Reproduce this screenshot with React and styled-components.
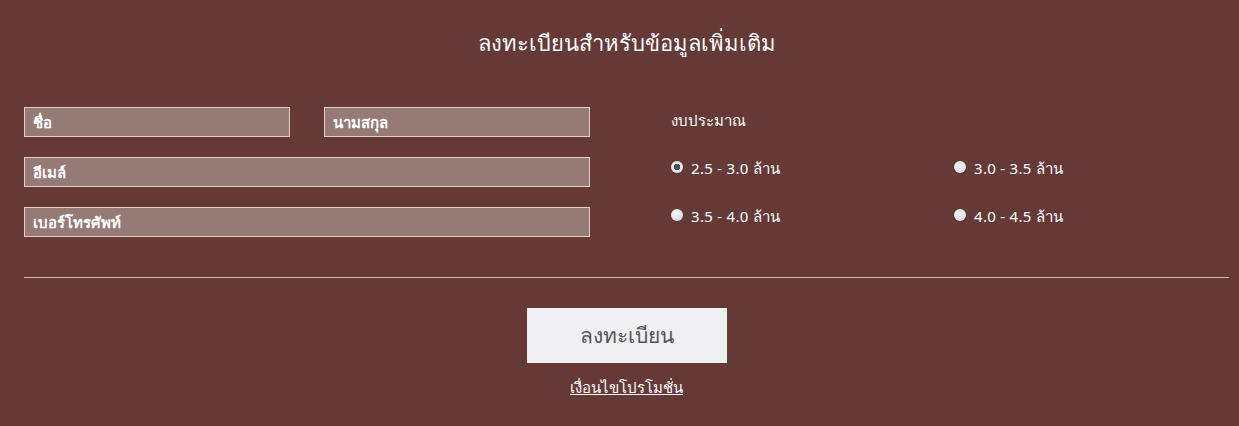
import React from 'react'
import styled, { createGlobalStyle } from 'styled-components'

const GlobalStyle = createGlobalStyle`
    body {
        margin: 0;
        background: #653a36;
        font-family: "Noto Sans", "DejaVu Sans", sans-serif;
    }
`

const Section = styled.section`
    background: #653a36;
    color: #fff;
    padding: 27px 10px 40px 24px;
    min-height: 426px;
    box-sizing: border-box;
`

const Title = styled.h2`
    margin: 0;
    font-size: 22px;
    font-weight: 400;
    line-height: 30px;
    text-align: center;
`

const FormGrid = styled.div`
    display: grid;
    grid-template-columns: 566px 1fr;
    column-gap: 75px;
    margin-top: 50px;
`

const Fields = styled.div`
    display: flex;
    flex-direction: column;
    gap: 20px;
`

const Row = styled.div`
    display: grid;
    grid-template-columns: 1fr 1fr;
    column-gap: 34px;
`

const Input = styled.input`
    display: block;
    width: 100%;
    height: 30px;
    box-sizing: border-box;
    background: #957a76;
    border: 1px solid #e9cdc6;
    padding: 0 8px;
    color: #fff;
    font-family: inherit;
    font-size: 15px;
    font-weight: 700;
    outline: none;
    &::placeholder {
        color: #fff;
        opacity: 1;
    }
`

const Budget = styled.div`
    padding-left: 6px;
`

const BudgetLabel = styled.div`
    font-size: 15px;
    line-height: 26px;
`

const Options = styled.div`
    display: grid;
    grid-template-columns: 283px 1fr;
    row-gap: 18px;
    margin-top: 20px;
`

const Option = styled.label`
    display: flex;
    align-items: center;
    gap: 8px;
    font-size: 15px;
    line-height: 30px;
    letter-spacing: 0.3px;
    cursor: pointer;
`

const Radio = styled.input`
    appearance: none;
    width: 12px;
    height: 12px;
    margin: 0 0 2px 0;
    border-radius: 50%;
    background: radial-gradient(circle at 40% 35%, #f4f6f6, #d6d8d8);
    &:checked {
        background: radial-gradient(circle, #44505a 0, #44505a 3px, #e6e8e8 3.5px);
    }
`

const Divider = styled.hr`
    border: 0;
    border-top: 1px solid #d9b8b0;
    margin: 40px 0 0;
`

const Actions = styled.div`
    display: flex;
    flex-direction: column;
    align-items: center;
`

const Button = styled.button`
    width: 200px;
    height: 55px;
    margin-top: 30px;
    border: 0;
    background: #f0f0f3;
    color: #555;
    font-family: inherit;
    font-size: 21px;
    cursor: pointer;
`

const Terms = styled.a`
    margin-top: 13px;
    color: #fff;
    font-size: 15px;
    text-decoration: underline;
`

const budgets = ['2.5 - 3.0 ล้าน', '3.0 - 3.5 ล้าน', '3.5 - 4.0 ล้าน', '4.0 - 4.5 ล้าน']

export default function App() {
    return (
        <Section>
            <GlobalStyle />
            <Title>ลงทะเบียนสำหรับข้อมูลเพิ่มเติม</Title>
            <FormGrid>
                <Fields>
                    <Row>
                        <Input placeholder="ชื่อ" />
                        <Input placeholder="นามสกุล" />
                    </Row>
                    <Input placeholder="อีเมล์" />
                    <Input placeholder="เบอร์โทรศัพท์" />
                </Fields>
                <Budget>
                    <BudgetLabel>งบประมาณ</BudgetLabel>
                    <Options>
                        {budgets.map((b, i) => (
                            <Option key={b}>
                                <Radio type="radio" name="budget" defaultChecked={i === 0} />
                                {b}
                            </Option>
                        ))}
                    </Options>
                </Budget>
            </FormGrid>
            <Divider />
            <Actions>
                <Button>ลงทะเบียน</Button>
                <Terms href="#">เงื่อนไขโปรโมชั่น</Terms>
            </Actions>
        </Section>
    )
}
